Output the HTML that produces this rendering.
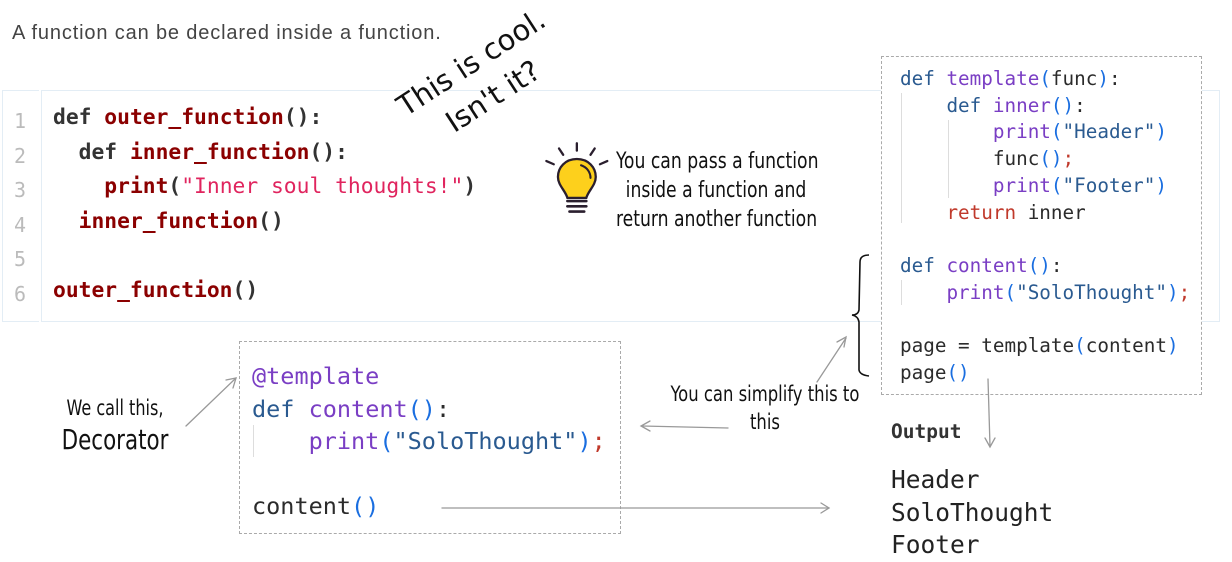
<!DOCTYPE html>
<html><head><meta charset="utf-8"><style>
html,body{margin:0;padding:0;background:#fff;width:1232px;height:562px;overflow:hidden;position:relative}
.a{position:absolute;white-space:pre}
.mono{font-family:"DejaVu Sans Mono","Liberation Mono",monospace}
.hand{font-family:"DejaVu Sans Condensed","Liberation Sans",sans-serif;color:#111}
.k{color:#333}.f{color:#8b0000}.s{color:#e0245e}
.kw{color:#2a5a90}.fn{color:#7a3ec4}.br{color:#1a6ee0}.rd{color:#c0392b}.tx{color:#2b2b2b}
</style></head><body>
<div class="a" style="left:12px;top:22px;font-family:'Liberation Sans',sans-serif;font-size:20px;letter-spacing:0.85px;color:#444">A function can be declared inside a function.</div>

<!-- main code box -->
<div class="a" style="left:2px;top:90px;width:36px;height:230px;border:1px solid #e3edf5;border-right:none"></div>
<div class="a" style="left:41px;top:90px;width:1177px;height:230px;border:1px solid #e3edf5"></div>
<div class="a mono" style="left:14px;top:104px;font-size:20px;line-height:34.6px;color:#bbb">1
2
3
4
5
6</div>
<div class="a mono" style="left:53px;top:101px;font-size:21.3px;line-height:34.6px;font-weight:bold"><span class="k">def</span> <span class="f">outer_function</span><span class="k">():</span>
  <span class="k">def</span> <span class="f">inner_function</span><span class="k">():</span>
    <span class="f">print</span><span class="k">(</span><span class="s" style="font-weight:normal">"Inner soul thoughts!"</span><span class="k">)</span>
  <span class="f">inner_function</span><span class="k">()</span>

<span class="f">outer_function</span><span class="k">()</span></div>

<!-- rotated note -->
<div class="a" style="left:398px;top:42px;line-height:40px;text-align:center;transform:rotate(-33deg);transform-origin:80px 40px;font-family:'DejaVu Sans','Liberation Sans',sans-serif;font-size:29px;color:#111">This is cool.
Isn't it?</div>

<!-- bulb -->
<svg class="a" style="left:538px;top:138px" width="84" height="84" viewBox="0 0 80 80">
<g stroke="#2a1f2e" stroke-width="2.2" stroke-linecap="round" fill="none">
<line x1="37" y1="5" x2="37" y2="12"/><line x1="20" y1="10" x2="24" y2="16"/><line x1="54" y1="10" x2="50" y2="16"/>
<line x1="8" y1="22" x2="15" y2="25"/><line x1="66" y1="22" x2="59" y2="25"/>
</g>
<path d="M37 20 C26 20 19 28 19 37 C19 45 26 50 28 57 L46 57 C48 50 55 45 55 37 C55 28 48 20 37 20Z" fill="#fdd01c" stroke="#2a1f2e" stroke-width="2.2"/>
<path d="M41 26 C47 28 50 33 50 38" stroke="#2a1f2e" stroke-width="2" fill="none" stroke-linecap="round"/>
<g stroke="#2a1f2e" stroke-width="2.5" stroke-linecap="round"><line x1="28" y1="60" x2="46" y2="60"/><line x1="28" y1="65" x2="46" y2="65"/><line x1="30" y1="70" x2="44" y2="70"/></g>
</svg>
<div class="a hand" style="left:601px;top:147px;width:230px;text-align:center;font-size:22px;line-height:29px;transform:scaleX(0.87)">You can pass a function
inside a function and
return another function</div>

<!-- right code box -->
<div class="a" style="left:881px;top:56px;width:319px;height:337px;border:1px dashed #aaa;background:#fff"></div>
<div class="a" style="left:901px;top:93px;width:0;height:130px;border-left:1px solid #ddd"></div>
<div class="a" style="left:948px;top:120px;width:0;height:78px;border-left:1px solid #ddd"></div>
<div class="a" style="left:901px;top:280px;width:0;height:25px;border-left:1px solid #ddd"></div>
<div class="a mono" style="left:900px;top:66px;font-size:19.3px;line-height:26.7px"><span class="kw">def</span> <span class="fn">template</span><span class="br">(</span><span class="tx">func</span><span class="br">)</span><span class="tx">:</span>
    <span class="kw">def</span> <span class="fn">inner</span><span class="br">()</span><span class="tx">:</span>
        <span class="fn">print</span><span class="br">(</span><span class="kw">"Header"</span><span class="br">)</span>
        <span class="tx">func</span><span class="br">()</span><span class="rd">;</span>
        <span class="fn">print</span><span class="br">(</span><span class="kw">"Footer"</span><span class="br">)</span>
    <span class="rd">return</span> <span class="tx">inner</span>

<span class="kw">def</span> <span class="fn">content</span><span class="br">()</span><span class="tx">:</span>
    <span class="fn">print</span><span class="br">(</span><span class="kw">"SoloThought"</span><span class="br">)</span><span class="rd">;</span>

<span class="tx">page = template</span><span class="br">(</span><span class="tx">content</span><span class="br">)</span>
<span class="tx">page</span><span class="br">()</span></div>

<!-- bottom box -->
<div class="a" style="left:239px;top:341px;width:380px;height:191px;border:1px dashed #aaa"></div>
<div class="a" style="left:253px;top:425px;width:0;height:32px;border-left:1px solid #ddd"></div>
<div class="a mono" style="left:252px;top:360px;font-size:23.5px;line-height:32.6px"><span class="fn">@template</span>
<span class="kw">def</span> <span class="fn">content</span><span class="br">()</span><span class="tx">:</span>
    <span class="fn">print</span><span class="br">(</span><span class="kw">"SoloThought"</span><span class="br">)</span><span class="rd">;</span>

<span class="tx">content</span><span class="br">()</span></div>

<div class="a hand" style="left:40px;top:392px;width:150px;text-align:center;font-size:21px;line-height:32px;transform:scaleX(0.85)">We call this,
<span style="font-size:28px">Decorator</span></div>
<div class="a hand" style="left:655px;top:380px;width:220px;text-align:center;font-size:21px;line-height:28px;transform:scaleX(0.87)">You can simplify this to
this</div>

<div class="a mono" style="left:891px;top:420px;font-size:19.5px;font-weight:bold;color:#333">Output</div>
<div class="a mono" style="left:891px;top:464px;font-size:24.5px;line-height:32.5px;color:#222">Header
SoloThought
Footer</div>

<!-- arrows & brace -->
<svg class="a" style="left:0;top:0" width="1232" height="562">
<g stroke="#999" stroke-width="1.3" fill="none" stroke-linecap="round">
<path d="M186 426 L236 378"/><path d="M226 380 L236 378 L233 388"/>
<path d="M728 428 L642 426"/><path d="M650 421 L641 426 L650 431"/>
<path d="M442 508 L829 508"/><path d="M821 503 L829 508 L821 513"/>
<path d="M817 382 L846 338"/><path d="M837 342 L846 337 L844 347"/>
<path d="M988 379 L990 446"/><path d="M985 438 L990 447 L995 438"/>
</g>
<path d="M869 255 Q860 255 860 262 L859 310 Q858 315 852 315 Q858 316 859 322 L859 370 Q860 375 869 376" stroke="#111" stroke-width="1.6" fill="none"/>
</svg>
</body></html>
